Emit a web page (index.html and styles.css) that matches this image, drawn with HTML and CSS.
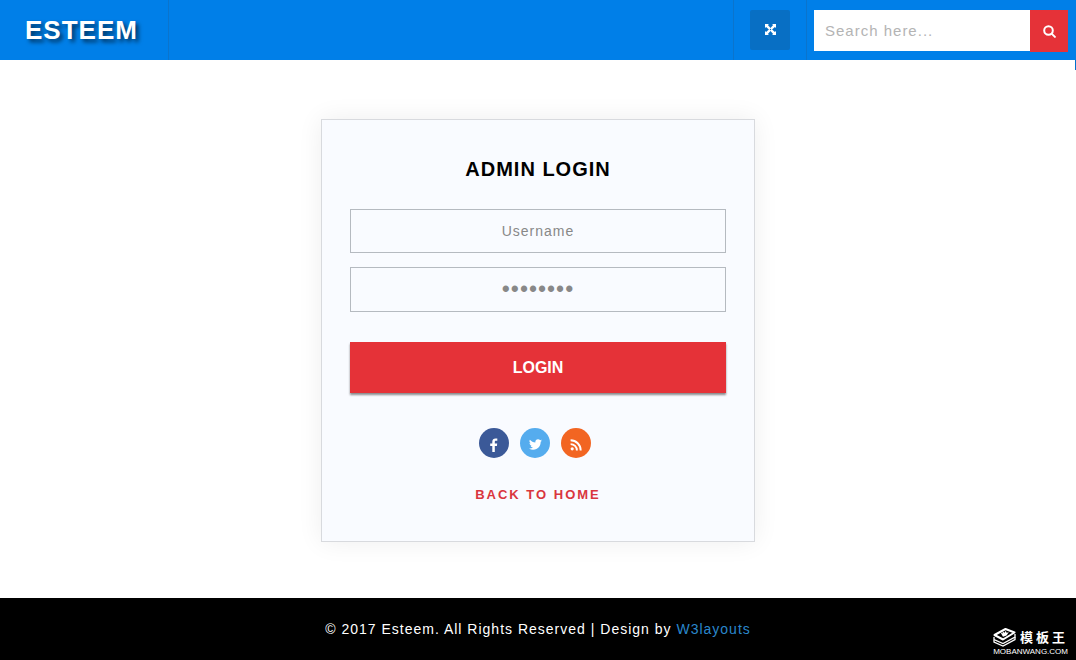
FILE: index.html
```html
<!DOCTYPE html>
<html lang="en">
<head>
<meta charset="utf-8">
<title>Esteem - Admin Login</title>
<link rel="stylesheet" href="styles.css">
</head>
<body>
<header class="topbar">
  <a class="brand" href="#">ESTEEM</a>
  <div class="tools">
    <button class="expand" type="button" aria-label="Full screen">
      <svg width="11" height="11" viewBox="0 0 11 11" fill="#fff" aria-hidden="true">
        <path d="M0 0h4L2.900 1.100 5.500 3.900 8.100 1.100 7 0h4v4L9.900 2.900 7.100 5.500l2.800 2.600L11 7v4H7l1.100-1.100L5.500 7.100 2.900 9.900 4 11H0V7l1.100 1.100L3.900 5.500 1.100 2.900 0 4z"/>
        <circle cx="5.500" cy="5.500" r=".7" fill="#086fc4"/>
      </svg>
    </button>
  </div>
  <form class="search">
    <input class="search-text" type="search" placeholder="Search here..." aria-label="Search">
    <button class="search-go" type="submit" aria-label="Search">
      <svg width="13" height="13" viewBox="0 0 13 13" fill="none" stroke="#fff" stroke-width="2" aria-hidden="true">
        <circle cx="5.500" cy="5.500" r="4.300"/><path d="M8.600 8.600l3.300 3.300" stroke-linecap="round"/>
      </svg>
    </button>
  </form>
</header>
<main class="main">
  <section class="card">
    <h1 class="title">ADMIN LOGIN</h1>
    <form class="login">
      <input class="field" type="text" placeholder="Username" aria-label="Username">
      <input class="field secret" type="password" value="password" aria-label="Password">
      <button class="submit" type="submit">LOGIN</button>
    </form>
    <nav class="social">
      <a class="dot facebook" href="#" aria-label="Facebook">
        <svg width="14" height="14" viewBox="0 0 14 14" fill="#fff" aria-hidden="true"><path d="M10.300.600v2.200H9c-1 0-1.200.500-1.200 1.200v1.500h2.400l-.3 2.400H7.800V14H5.300V7.900H3.200V5.500h2.100V3.700C5.300 1.600 6.600.500 8.500.500c.9 0 1.600.100 1.800.100z"/></svg>
      </a>
      <a class="dot twitter" href="#" aria-label="Twitter">
        <svg width="13" height="13" viewBox="0 0 24 24" fill="#fff" aria-hidden="true"><path d="M24 4.600a10 10 0 0 1-2.800.8 5 5 0 0 0 2.200-2.700c-1 .6-2 1-3.100 1.200a4.900 4.900 0 0 0-8.400 4.500C7.700 8.100 4.100 6.100 1.700 3.100a4.900 4.900 0 0 0 1.500 6.600c-.8 0-1.600-.2-2.200-.6v.1c0 2.400 1.700 4.400 4 4.800a5 5 0 0 1-2.300.1 4.900 4.900 0 0 0 4.600 3.400A9.900 9.900 0 0 1 0 19.500 14 14 0 0 0 21.500 7.100c1-.7 1.800-1.600 2.500-2.500z"/></svg>
      </a>
      <a class="dot rss" href="#" aria-label="RSS">
        <svg width="12" height="12" viewBox="0 0 12 12" fill="none" stroke="#fff" stroke-width="1.900" aria-hidden="true"><circle cx="2.200" cy="9.800" r="1.600" fill="#fff" stroke="none"/><path d="M.6 5.100a6.300 6.300 0 0 1 6.300 6.300M.6 1.300a10.100 10.100 0 0 1 10.100 10.100"/></svg>
      </a>
    </nav>
    <a class="back" href="#">BACK TO HOME</a>
  </section>
</main>
<footer class="footer">
  <p class="copy">© 2017 Esteem. All Rights Reserved | Design by <a class="credit" href="#">W3layouts</a></p>
  <div class="stamp">
    <div class="stamp-top">
      <svg width="23" height="19" viewBox="0 0 23 19" aria-hidden="true">
        <path d="M1 12v2l9 4 12-6.500V9" fill="none" stroke="#fff" stroke-width="1.300"/>
        <path d="M1 9v2.500l9 4 12-6.500V6" fill="none" stroke="#fff" stroke-width="1.300"/>
        <path d="M1.500 7L12.500 1l9 3.500L10 11.500z" fill="#000" stroke="#fff" stroke-width="2" stroke-linejoin="round"/>
        <path d="M7.500 4.500l2 1 .3-2 1.700 1.200 1.300-2 .8 2 2.200-.5-2.300 3.300-3.500 1.200z" fill="#fff"/>
      </svg>
      <span class="stamp-name" lang="zh">模板王</span>
    </div>
    <span class="stamp-url">MOBANWANG.COM</span>
  </div>
</footer>
</body>
</html>
```
FILE: styles.css
```css
* { box-sizing: border-box; }
body {
  margin: 0;
  min-height: 100vh;
  display: flex;
  flex-direction: column;
  background: #fff;
  font-family: "Liberation Sans", Arial, sans-serif;
  font-size: 14px;
  letter-spacing: 1px;
}
a { text-decoration: none; }
input, button { font-family: inherit; border: 0; border-radius: 0; margin: 0; padding: 0; }
button { display: flex; align-items: center; justify-content: center; cursor: pointer; }

.topbar {
  position: relative;
  display: flex;
  height: 60px;
  background: #007fe8;
}
.topbar::after {
  content: "";
  position: absolute;
  top: 100%;
  right: 0;
  width: 1px;
  height: 10px;
  background: #0070cc;
}
.brand {
  padding: 0 30px 0 25px;
  border-right: 1px solid #0b74cc;
  color: #fff;
  font-size: 26px;
  font-weight: 700;
  line-height: 60px;
  text-shadow: 3px 3px 4px rgba(0, 0, 0, 0.6);
}
.tools {
  margin-left: auto;
  padding: 10px 16px;
  border: solid #0b74cc;
  border-width: 0 1px;
}
.expand { width: 40px; height: 40px; padding-bottom: 2px; background: #086fc4; border-radius: 2px; }
.search { display: flex; align-items: flex-start; padding: 10px 8px 0 7px; }
.search-text {
  width: 216px;
  height: 41px;
  padding: 0 11px;
  background: #fff;
  font-size: 15px;
  letter-spacing: 1px;
  appearance: none;
}
.search-text::placeholder { color: #b4b4b4; }
.search-go { width: 38px; height: 42px; background: #e53238; }

.main { flex: 1; display: flex; justify-content: center; align-items: flex-start; padding: 59px 16px 56px; }
.card {
  width: 434px;
  max-width: 100%;
  padding: 37px 28px 39px;
  background: #f9fbff;
  border: 1px solid #d8dade;
  box-shadow: 0 0 24px rgba(0, 0, 0, 0.07);
  text-align: center;
}
.title { margin: 0 0 27px; font-size: 20px; line-height: 25px; color: #000; }
.login { display: flex; flex-direction: column; gap: 14px; }
.field {
  width: 100%;
  height: 44px;
  border: 1px solid #b5bac0;
  background: transparent;
  color: #888;
  font-size: 14px;
  letter-spacing: 1px;
  text-align: center;
}
.field::placeholder { color: #888; }
.secret { height: 45px; font-size: 23px; }
.submit {
  height: 51px;
  margin-top: 16px;
  background: #e53238;
  box-shadow: 0 2px 2px rgba(0, 0, 0, 0.45);
  color: #fff;
  font-size: 16px;
  font-weight: 700;
}
.social { display: flex; justify-content: center; gap: 11px; margin: 35px 6px 29px 0; }
.dot { display: flex; align-items: center; justify-content: center; width: 30px; height: 30px; padding-top: 3px; border-radius: 50%; }
.facebook { background: #3b5998; }
.twitter { background: #55acee; }
.rss { background: #f26522; }
.back { display: block; color: #d9363e; font-size: 13px; font-weight: 700; line-height: 15px; letter-spacing: 2px; }

.footer { position: relative; padding: 22px 0; background: #000; color: #fff; text-align: center; }
.copy { margin: 0; line-height: 18px; }
.credit { color: #2a87cc; }
.stamp { position: absolute; right: 8px; bottom: 4px; }
.stamp-top { display: flex; align-items: center; justify-content: space-between; }
.stamp-name { font-family: "Noto Sans CJK SC", sans-serif; font-size: 13px; font-weight: 700; line-height: 20px; letter-spacing: 3px; }
.stamp-url { display: block; font-size: 8px; line-height: 9px; letter-spacing: 0; }
```
